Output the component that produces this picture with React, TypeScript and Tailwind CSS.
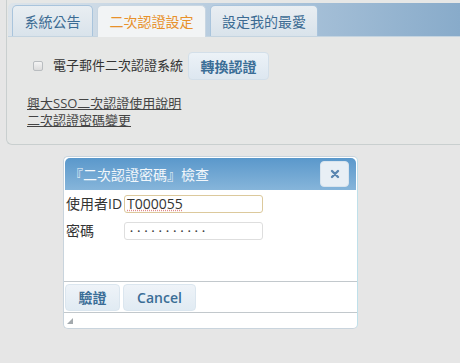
const font = "font-['Open_Sans','Noto_Sans_CJK_TC',sans-serif]";

function Tab({ label, active, w }: { label: string; active?: boolean; w: string }) {
  return (
    <div
      className={`${w} flex h-[31px] items-center justify-center rounded-t-[5px] border border-b-0 text-[14px] ${
        active
          ? "h-[32px] -mb-px border-[#c8d6e2] bg-[#f2f4f5] text-[#e8912b]"
          : "border-[#a9c4dc] bg-gradient-to-b from-[#e9eef2] to-[#d9e3eb] text-[#3b6b93]"
      }`}
    >
      {label}
    </div>
  );
}

export default function App() {
  return (
    <div className={`h-[363px] w-[460px] overflow-hidden bg-[#e6e6e6] ${font}`}>
      {/* 上方分頁面板 */}
      <div className="ml-[6px] h-[145px] rounded-bl-[6px] border border-r-0 border-t-0 border-[#c9cfcf] bg-[#e6e7e6] pl-[1px] pt-[3px]">
        <div className="flex h-[34px] items-end gap-[4px] rounded-tl-[5px] border-b border-[#c4d4e0] bg-gradient-to-r from-[#dde4ea] via-[#b4cade] to-[#88abca] pl-[4px]">
          <Tab label="系統公告" w="w-[81px]" />
          <Tab label="二次認證設定" w="w-[109px]" active />
          <Tab label="設定我的最愛" w="w-[108px]" />
        </div>

        <div className="flex items-center pl-[25px] pt-[15px]">
          <span className="h-[10px] w-[10px] rounded-[2px] border border-[#b9bdc0] bg-gradient-to-b from-[#f4f4f4] to-[#dcdcdc]" />
          <span className="ml-[10px] text-[13px] text-[#333]">電子郵件二次認證系統</span>
          <button className="ml-[5px] h-[28px] w-[81px] rounded-[4px] border border-[#d3dfe9] bg-gradient-to-b from-[#ecf2f7] to-[#dde7f0] text-[14px] font-bold text-[#3a6d96]">
            轉換認證
          </button>
        </div>

        <div className="flex flex-col pl-[19px] pt-[15px] text-[13px] leading-[17px] text-[#444]">
          <a className="w-fit underline">興大SSO二次認證使用說明</a>
          <a className="w-fit underline">二次認證密碼變更</a>
        </div>
      </div>

      {/* 二次認證對話框 */}
      <div className="ml-[63px] mt-[11px] flex w-[295px] flex-col rounded-[5px] border border-[#c9d4dd] border-r-[#bfe0ea] bg-white">
        <div className="m-[1px] flex h-[32px] items-center justify-between rounded-t-[5px] bg-gradient-to-b from-[#5a98cb] to-[#86b5da] pl-[4px] pr-[7px]">
          <span className="text-[14px] text-[#f2f7fb]">『二次認證密碼』檢查</span>
          <button className="flex h-[26px] w-[29px] items-center justify-center rounded-[4px] border border-[#d8e4ee] bg-[#e8eff5]">
            <svg width="10" height="10" viewBox="0 0 10 10">
              <path d="M2 2L8 8M8 2L2 8" stroke="#5b86b0" strokeWidth="2.4" strokeLinecap="round" />
            </svg>
          </button>
        </div>

        <div className="flex h-[90px] flex-col gap-[9px] pl-[2px] pt-[4px] text-[14px] leading-[18px] text-[#333]">
          <div className="flex items-center">
            <span className="w-[58px]">使用者ID</span>
            <div className="flex h-[18px] w-[139px] items-center rounded-[3px] border border-[#dcc99c] pl-[2px]">
              <span className="underline decoration-[#e08a8a] decoration-dotted">T000055</span>
            </div>
          </div>
          <div className="flex items-center">
            <span className="w-[58px]">密碼</span>
            <div className="flex h-[18px] w-[139px] items-center rounded-[3px] border border-[#dedede] pl-[5px] text-[8px] tracking-[4.2px] text-[#444]">
              •••••••••••
            </div>
          </div>
        </div>

        <div className="flex h-[32px] items-center gap-[3px] border-y border-[#c2c8cc] pl-[1px]">
          <button className="h-[27px] w-[55px] rounded-[4px] border border-[#dbe6ef] bg-gradient-to-b from-[#eef3f8] to-[#e1ebf3] text-[14px] font-bold text-[#3a6d96]">
            驗證
          </button>
          <button className="h-[27px] w-[73px] rounded-[4px] border border-[#dbe6ef] bg-gradient-to-b from-[#eef3f8] to-[#e1ebf3] text-[14px] font-semibold text-[#3a6d96]">
            Cancel
          </button>
        </div>

        <div className="flex h-[15px] items-center pl-[3px]">
          <svg width="6" height="6" viewBox="0 0 6 6">
            <path d="M6 0L6 6L0 6Z" fill="#a3a9ad" />
          </svg>
        </div>
      </div>
    </div>
  );
}
